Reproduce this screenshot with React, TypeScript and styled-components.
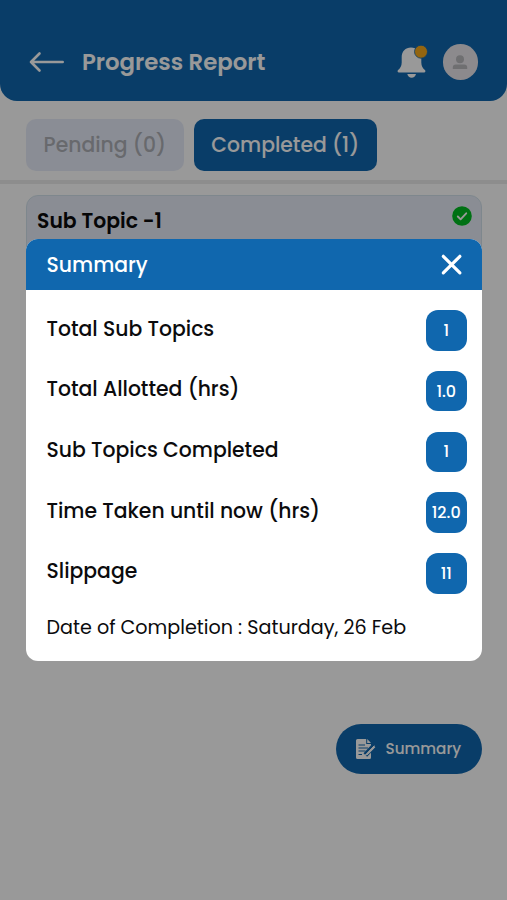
import React from 'react';
import styled, { createGlobalStyle } from 'styled-components';

const BLUE = '#1067ae';

const GlobalStyle = createGlobalStyle`
  * { box-sizing: border-box; }
  html, body { margin: 0; height: 100%; overflow: hidden; }
  body { background: #fff; font-family: Poppins, Inter, sans-serif; color: #0b0b0d; }
  button { font-family: inherit; border: 0; cursor: pointer; }
`;

const Screen = styled.div`
  position: relative;
  height: 900px;
  overflow: hidden;
  background: #fff;
`;

const Header = styled.header`
  display: flex;
  align-items: flex-end;
  height: 100.5px;
  padding: 0 29px 20px 28px;
  border-radius: 0 0 17px 17px;
  background: ${BLUE};
  color: #fff;
`;

const HeaderRow = styled.div`
  display: flex;
  align-items: center;
  width: 100%;
  height: 37px;
`;

const IconButton = styled.button<{ $w: number; $h: number }>`
  display: flex;
  align-items: center;
  justify-content: center;
  width: ${(p) => p.$w}px;
  height: ${(p) => p.$h}px;
  padding: 0;
  background: transparent;
  color: #fff;
`;

const Title = styled.h1`
  flex: 1;
  margin: 0 0 0 17px;
  font-size: 22.8px;
  line-height: 36px;
  font-weight: 600;
  white-space: nowrap;
`;

const Actions = styled.div`
  display: flex;
  align-items: center;
  gap: 14.5px;
`;

const Avatar = styled.div`
  display: flex;
  align-items: center;
  justify-content: center;
  width: 35.5px;
  height: 35.5px;
  border-radius: 50%;
  background: #e9e6ec;
`;

const Tabs = styled.nav`
  display: flex;
  gap: 10px;
  height: 83.5px;
  padding: 18.5px 26px 0;
  border-bottom: 4px solid #ebebeb;
`;

const Tab = styled.button<{ $active?: boolean; $w: number }>`
  width: ${(p) => p.$w}px;
  height: 52px;
  padding: 0;
  border-radius: 10px;
  background: ${(p) => (p.$active ? BLUE : '#e7ecf9')};
  color: ${(p) => (p.$active ? '#fff' : '#adb0b6')};
  font-size: 20.35px;
  font-weight: 500;
  white-space: nowrap;
`;

const Topic = styled.section`
  display: flex;
  justify-content: space-between;
  height: 110px;
  margin: 11px 25px 0 26px;
  padding: 9.5px 9.5px 0 10px;
  border: 1px solid #d3e2ec;
  border-radius: 12px;
  background: #e7ecf7;
`;

const TopicName = styled.h2`
  margin: 0;
  font-size: 20.35px;
  line-height: 30px;
  font-weight: 600;
`;

const Fab = styled.button`
  position: absolute;
  right: 25.5px;
  top: 723.5px;
  display: flex;
  align-items: center;
  gap: 9px;
  width: 146px;
  height: 50.5px;
  padding: 0 0 0 19px;
  border-radius: 26px;
  background: ${BLUE};
  color: #fff;
  font-size: 15.2px;
  font-weight: 500;
`;

const Overlay = styled.div`
  position: absolute;
  inset: 0;
  display: flex;
  align-items: center;
  padding: 0 25.5px 0 26px;
  background: rgba(0, 0, 0, 0.4);
`;

const Dialog = styled.div`
  flex: 1;
  height: 421.5px;
  overflow: hidden;
  border-radius: 12px;
  background: #fff;
`;

const DialogHeader = styled.div`
  display: flex;
  align-items: center;
  justify-content: space-between;
  height: 50.5px;
  padding: 0 19px 0 20.5px;
  background: ${BLUE};
  color: #fff;
`;

const DialogTitle = styled.h2`
  margin: 0;
  font-size: 20.35px;
  font-weight: 500;
  line-height: 48px;
`;

const List = styled.dl`
  display: grid;
  gap: 20.2px;
  margin: 0;
  padding: 20.5px 15px 0 20.5px;
`;

const Row = styled.div`
  display: flex;
  align-items: center;
  justify-content: space-between;
  height: 40.5px;
`;

const Label = styled.dt`
  padding-bottom: 3.8px;
  font-size: 20.35px;
  line-height: 30px;
  font-weight: 500;
  white-space: nowrap;
`;

const Value = styled.dd`
  display: flex;
  align-items: center;
  justify-content: center;
  width: 40.5px;
  height: 40.5px;
  margin: 0;
  border-radius: 12px;
  background: ${BLUE};
  color: #fff;
  font-size: 16px;
  font-weight: 500;
`;

const Completion = styled.p`
  margin: 20.3px 0 0 20.5px;
  font-size: 19.15px;
  line-height: 28px;
  white-space: nowrap;
`;

const stats = [
  { label: 'Total Sub Topics', value: '1' },
  { label: 'Total Allotted (hrs)', value: '1.0' },
  { label: 'Sub Topics Completed', value: '1' },
  { label: 'Time Taken until now (hrs)', value: '12.0' },
  { label: 'Slippage', value: '11' },
];

const BackIcon = () => (
  <svg width="37" height="22" viewBox="0 0 37 22" fill="none" stroke="currentColor" strokeWidth="2.6" strokeLinecap="round" strokeLinejoin="round">
    <path d="M34.700 11H3M11.500 2.500L3 11L11.500 19.500" />
  </svg>
);

const BellIcon = () => (
  <svg width="31" height="36" viewBox="0 0 31 36">
    <path fill="#fff" d="M14 3.500C8.400 3.500 4.700 7.500 4.700 13V18.500c0 3.700-1.600 5.800-3.600 7.600-1 1-.6 2.400.8 2.400h25.200c1.400 0 1.800-1.400.8-2.400-2-1.800-3.600-3.900-3.600-7.600V13C24.300 7.500 19.600 3.500 14 3.500ZM10.300 30h8.700c-.5 2.400-2.200 3.700-4.350 3.700S10.800 32.400 10.300 30Z" />
    <circle cx="24" cy="7.700" r="6.500" fill="#f5a81c" stroke={BLUE} strokeWidth="0.8" />
  </svg>
);

const PersonIcon = () => (
  <svg width="18" height="18" viewBox="0 0 18 18" fill="#b9b9bd">
    <circle cx="9" cy="6.200" r="4" />
    <path d="M1.800 16v-1.500c0-2 1.200-2.900 3-2.900h8.400c1.800 0 3 .9 3 2.900V16Z" />
  </svg>
);

const CheckIcon = () => (
  <svg width="20" height="20" viewBox="0 0 20 20">
    <circle cx="10" cy="10" r="9.800" fill="#00bd22" />
    <path d="M5.800 10.500L8.600 13.300L14.200 7.300" fill="none" stroke="#fff" strokeWidth="1.900" strokeLinecap="round" strokeLinejoin="round" />
  </svg>
);

const CloseIcon = () => (
  <svg width="22" height="22" viewBox="0 0 22 22" fill="none" stroke="currentColor" strokeWidth="3.200" strokeLinecap="round">
    <path d="M2.300 2.300L18.900 18.900M18.900 2.300L2.300 18.900" />
  </svg>
);

const NoteIcon = () => (
  <svg width="22" height="22" viewBox="0 0 22 22">
    <path fill="#fff" d="M2.500 1h8.700v5h4.800v13.500a1.500 1.500 0 0 1-1.500 1.500h-12A1.500 1.500 0 0 1 1 19.500v-17A1.500 1.500 0 0 1 2.500 1ZM12.200 1L16 5H12.200Z" />
    <path d="M3.500 7H10M3.500 10H13M3.500 13H10.500M3.500 16.500H7" stroke={BLUE} strokeWidth="1.200" />
    <path d="M18.800 8L10.300 17" stroke={BLUE} strokeWidth="5" />
    <path d="M19.300 7.700L12.200 15.100L10.200 17.300L13 16.200L20 9.100" fill="#fff" stroke="#fff" strokeWidth="1" strokeLinejoin="round" />
  </svg>
);

export default function App() {
  return (
    <>
      <GlobalStyle />
      <Screen>
        <Header>
          <HeaderRow>
            <IconButton $w={37} $h={36} aria-label="Back">
              <BackIcon />
            </IconButton>
            <Title>Progress Report</Title>
            <Actions>
              <IconButton $w={31} $h={36} aria-label="Notifications">
                <BellIcon />
              </IconButton>
              <Avatar>
                <PersonIcon />
              </Avatar>
            </Actions>
          </HeaderRow>
        </Header>
        <Tabs>
          <Tab $w={157.5}>Pending (0)</Tab>
          <Tab $active $w={183.5}>Completed (1)</Tab>
        </Tabs>
        <Topic>
          <TopicName>Sub Topic -1</TopicName>
          <CheckIcon />
        </Topic>
        <Fab>
          <NoteIcon />
          <span>Summary</span>
        </Fab>
        <Overlay>
          <Dialog role="dialog" aria-label="Summary">
            <DialogHeader>
              <DialogTitle>Summary</DialogTitle>
              <IconButton $w={22} $h={22} aria-label="Close">
                <CloseIcon />
              </IconButton>
            </DialogHeader>
            <List>
              {stats.map((s) => (
                <Row key={s.label}>
                  <Label>{s.label}</Label>
                  <Value>{s.value}</Value>
                </Row>
              ))}
            </List>
            <Completion>Date of Completion : Saturday, 26 Feb</Completion>
          </Dialog>
        </Overlay>
      </Screen>
    </>
  );
}
